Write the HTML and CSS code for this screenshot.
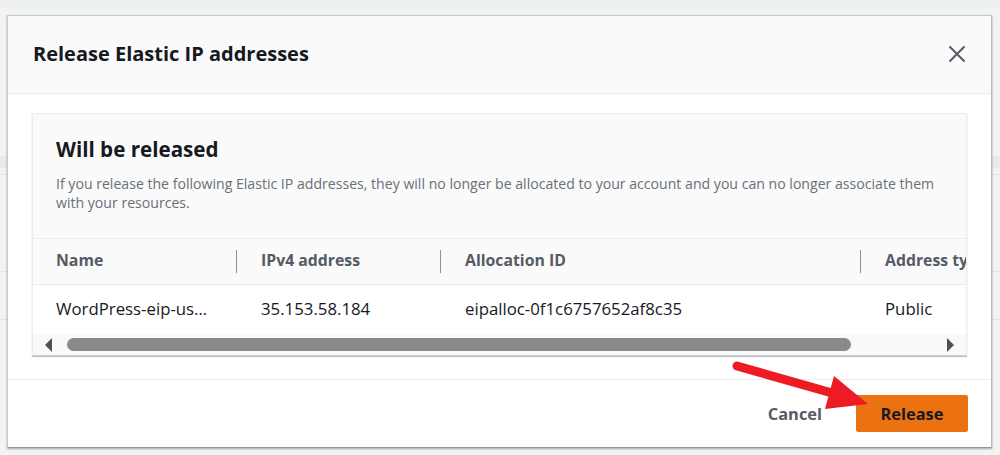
FILE: index.html
```html
<!DOCTYPE html>
<html>
<head>
<meta charset="utf-8">
<link rel="stylesheet" href="styles.css">
</head>
<body>
<div class="page">
  <div class="modal">
    <div class="modal-header">
      <h2 class="modal-title">Release Elastic IP addresses</h2>
      <button class="close" aria-label="Close">
        <svg width="18" height="18" viewBox="0 0 18 18"><path d="M1.5 1.5 L16.5 16.5 M16.5 1.5 L1.5 16.5" stroke="#545b64" stroke-width="2" fill="none"/></svg>
      </button>
    </div>
    <div class="modal-body">
      <div class="card">
        <div class="card-header">
          <h3 class="card-title">Will be released</h3>
          <p class="card-desc">If you release the following Elastic IP addresses, they will no longer be allocated to your account and you can no longer associate them with your resources.</p>
        </div>
        <div class="table-wrap">
          <div class="table">
            <div class="row head">
              <div class="cell c1">Name</div>
              <div class="cell c2 sep">IPv4 address</div>
              <div class="cell c3 sep">Allocation ID</div>
              <div class="cell c4 sep">Address type</div>
            </div>
            <div class="row body-row">
              <div class="cell c1">WordPress-eip-us…</div>
              <div class="cell c2">35.153.58.184</div>
              <div class="cell c3">eipalloc-0f1c6757652af8c35</div>
              <div class="cell c4">Public</div>
            </div>
          </div>
        </div>
        <div class="scrollbar">
          <span class="arrow left"></span>
          <div class="track"><div class="thumb"></div></div>
          <span class="arrow right"></span>
        </div>
      </div>
    </div>
    <div class="modal-footer">
      <button class="btn-link">Cancel</button>
      <button class="btn-primary">Release</button>
    </div>
  </div>
  <svg class="annot" width="1000" height="455" viewBox="0 0 1000 455">
    <line x1="737" y1="366" x2="832" y2="393" stroke="#ed1c24" stroke-width="9" stroke-linecap="round"/>
    <polygon points="834,376 868,404 825,409" fill="#ed1c24"/>
  </svg>
</div>
</body>
</html>
```
FILE: styles.css
```css
* { box-sizing: border-box; }
html, body { margin: 0; padding: 0; }
body {
  width: 1000px;
  height: 455px;
  overflow: hidden;
  font-family: "Open Sans", "Noto Sans", Arial, sans-serif;
  color: #16191f;
  background:
    linear-gradient(#e9ebeb, #e9ebeb) 0 156px / 100% 12px no-repeat,
    linear-gradient(#e3e6e6, #e3e6e6) 0 174px / 100% 1px no-repeat,
    linear-gradient(#e3e6e6, #e3e6e6) 0 271px / 100% 1px no-repeat,
    linear-gradient(#d7e6f3, #d7e6f3) 0 319px / 100% 1px no-repeat,
    linear-gradient(#eef0f0, #eef0f0) 0 0 / 100% 8px no-repeat,
    #f2f3f3;
}
.page { position: relative; padding: 15px 8px 0 7px; }
.modal {
  width: 985px;
  height: 433px;
  background: #fff;
  border: 1px solid #c5cbcd;
  border-bottom-color: #8d979a;
  border-right-color: #b4bcbf;
  box-shadow: 0 1px 2px rgba(0,28,36,0.35);
  display: flex;
  flex-direction: column;
}
.modal-header {
  height: 78px;
  background: #fafafa;
  border-bottom: 1px solid #eaeded;
  display: flex;
  align-items: center;
  justify-content: space-between;
  padding: 0 25px 2px 25px;
}
.modal-title {
  margin: 0;
  font-size: 20px;
  font-weight: 700;
  line-height: 28px;
  color: #16191f;
}
.close {
  border: 0;
  background: none;
  padding: 0;
  width: 18px;
  height: 18px;
  display: flex;
  align-items: center;
  justify-content: center;
}
.modal-body { padding: 19px 24px 0 24px; height: 285px; }
.card {
  border: 1px solid #eaeded;
  border-bottom-color: #c8ccce;
  box-shadow: 0 1px 1px rgba(0,28,36,0.25);
  background: #fff;
}
.card-header {
  background: #fafafa;
  padding: 20px 24px 20px 23px;
  height: 125px;
  border-bottom: 1px solid #eaeded;
}
.card-title {
  margin: 0;
  font-size: 20.6px;
  line-height: 30px;
  font-weight: 700;
  color: #16191f;
}
.card-desc {
  margin: 10px 0 0 0;
  font-size: 14.1px;
  line-height: 19px;
  color: #687078;
}
.table-wrap { overflow: hidden; }
.table { width: 1100px; }
.row { display: flex; }
.row.head {
  height: 46px;
  background: #fafafa;
  border-bottom: 1px solid #eaeded;
  font-weight: 700;
  color: #545b64;
  font-size: 15.8px;
}
.row.body-row { height: 49px; background: #fff; color: #16191f; font-size: 16.8px; }
.cell {
  position: relative;
  display: flex;
  align-items: center;
  padding: 0 24px 3px 24px;
  white-space: nowrap;
}
.c1 { width: 204px; padding-left: 23px; }
.c2 { width: 204px; }
.c3 { width: 420px; }
.c4 { width: 200px; }
.sep::before {
  content: "";
  position: absolute;
  left: -1px;
  top: 11px;
  height: 23px;
  width: 1px;
  background: #879596;
}
.scrollbar {
  height: 21px;
  background: #f9f9f9;
  display: flex;
  align-items: center;
  padding: 0 12px 0 12px;
}
.arrow { width: 0; height: 0; border-top: 7px solid transparent; border-bottom: 7px solid transparent; }
.arrow.left { border-right: 7px solid #505050; }
.arrow.right { border-left: 7px solid #505050; }
.track { flex: 1; padding: 0 96px 0 15px; }
.thumb { height: 13px; background: #8a8a8a; border-radius: 7px; }
.modal-footer {
  flex: 1;
  border-top: 1px solid #eaeded;
  display: flex;
  align-items: center;
  justify-content: flex-end;
  padding: 0 23px 1px 24px;
  gap: 14px;
}
.btn-link {
  border: 0;
  background: none;
  font-family: inherit;
  font-size: 16.4px;
  font-weight: 700;
  color: #545b64;
  padding: 0 20px;
}
.btn-primary {
  border: 0;
  background: #ec7211;
  color: #16191f;
  font-family: inherit;
  font-size: 16.4px;
  font-weight: 700;
  width: 112px;
  height: 37px;
  border-radius: 2px;
}
.annot { position: absolute; left: 0; top: 0; pointer-events: none; }
```
